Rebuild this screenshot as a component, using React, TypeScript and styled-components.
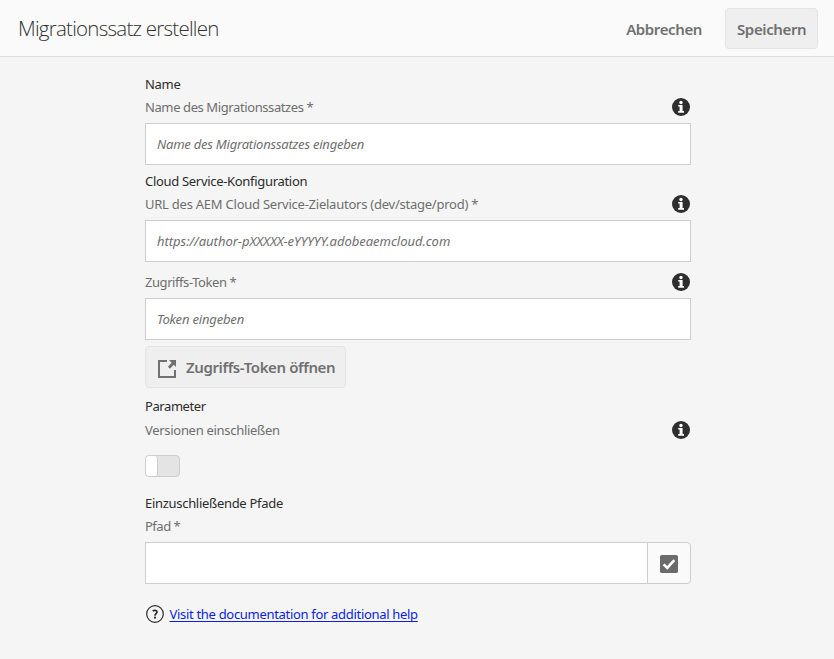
import React from "react";
import styled, { createGlobalStyle } from "styled-components";

const GlobalStyle = createGlobalStyle`
  *, *::before, *::after { box-sizing: border-box; }
  body {
    margin: 0;
    background: #f5f5f5;
    color: #323232;
    font-family: "Noto Sans", "Open Sans", sans-serif;
    font-size: 13px;
  }
`;

const Page = styled.div`
  min-height: 659px;
  background: #f5f5f5;
`;

const Header = styled.header`
  display: flex;
  align-items: center;
  height: 57px;
  padding: 0 16px 0 18px;
  background: #fafafa;
  border-bottom: 1px solid #dedede;
`;

const Title = styled.h1`
  flex: 1;
  margin: 0;
  font: 300 20.5px/30px "Open Sans", sans-serif;
  letter-spacing: -0.75px;
  color: #323232;
`;

const Button = styled.button<{ $quiet?: boolean }>`
  display: inline-flex;
  align-items: center;
  height: 41px;
  padding: 2px 11px 0;
  border: 1px solid ${(p) => (p.$quiet ? "transparent" : "#e4e4e4")};
  border-radius: 4px;
  background: ${(p) => (p.$quiet ? "transparent" : "#efefef")};
  color: #707070;
  font: 600 15px/20px "Noto Sans", sans-serif;
  letter-spacing: -0.38px;
  white-space: nowrap;
`;

const SaveButton = styled(Button)`
  width: 93px;
  margin-left: 11px;
`;

const TokenButton = styled(Button)`
  width: 201px;
  height: 42px;
  margin-top: 6px;
  padding-top: 0;
  svg { margin: 2px 9px 0 0; flex: none; }
`;

const Form = styled.main`
  width: 546px;
  margin-left: 145px;
  padding-top: 16px;
`;

const Section = styled.section<{ $gap?: number }>`
  margin-top: ${(p) => p.$gap ?? 0}px;
`;

const Heading = styled.h2<{ $track: number }>`
  height: 23px;
  margin: 0;
  font-size: 13px;
  font-weight: 400;
  line-height: 23px;
  letter-spacing: ${(p) => p.$track}px;
  color: #2c2c2c;
`;

const LabelRow = styled.div<{ $gap?: number }>`
  display: flex;
  align-items: flex-start;
  justify-content: space-between;
  height: 23px;
  margin-top: ${(p) => p.$gap ?? 0}px;
  padding-right: 1px;
  svg { margin-top: 2px; }
`;

const Label = styled.label<{ $track: number }>`
  line-height: 23px;
  letter-spacing: ${(p) => p.$track}px;
  color: #6e6e6e;
`;

const Input = styled.input<{ $track?: number }>`
  display: block;
  width: 100%;
  height: 42px;
  margin-top: 4px;
  padding: 0 11px;
  border: 1px solid #cdcdcd;
  border-radius: 0;
  outline: none;
  background: #fff;
  color: #323232;
  font: 400 13px/20px "Noto Sans", sans-serif;
  letter-spacing: ${(p) => p.$track ?? 0}px;
  &::placeholder {
    color: #6e6e6e;
    font-style: italic;
    opacity: 1;
  }
`;

const Switch = styled.button`
  display: block;
  width: 35px;
  height: 22px;
  margin-top: 13px;
  padding: 0;
  overflow: hidden;
  border: 1px solid #cdcdcd;
  border-radius: 4px;
  background: #e4e4e4;
`;

const Thumb = styled.span`
  display: block;
  width: 12px;
  height: 20px;
  border-right: 1px solid #cdcdcd;
  border-radius: 3px;
  background: #fff;
`;

const PathField = styled.div`
  display: flex;
  margin-top: 4px;
`;

const PathInput = styled(Input)`
  flex: 1;
  width: auto;
  min-width: 0;
  margin-top: 0;
  border-right: 0;
`;

const PickButton = styled.button`
  display: flex;
  align-items: center;
  justify-content: center;
  width: 44px;
  height: 42px;
  padding: 2px 0 0;
  border: 1px solid #cdcdcd;
  border-radius: 0 4px 4px 0;
  background: #fafafa;
`;

const Help = styled.div`
  display: flex;
  align-items: center;
  height: 20px;
  margin-top: 20px;
  padding-left: 1px;
  svg { flex: none; margin-right: 5.5px; }
`;

const HelpLink = styled.a`
  color: #0a1ee6;
  line-height: 20px;
  letter-spacing: -0.31px;
  text-decoration: underline;
  text-decoration-thickness: 1px;
  text-underline-offset: 2px;
  text-decoration-skip-ink: none;
`;

const InfoIcon = () => (
  <svg width="18" height="18" viewBox="0 0 18 18" aria-hidden="true">
    <circle cx="9" cy="9" r="9" fill="#2e2e2e" />
    <circle cx="9" cy="4.5" r="1.7" fill="#fff" />
    <path d="M6.2 7H10.6V13H12V14.7H6.2V13H7.6V8.6H6.2Z" fill="#fff" />
  </svg>
);

const OpenIcon = () => (
  <svg width="20" height="20" viewBox="0 0 20 20" fill="none" aria-hidden="true">
    <path d="M10 3H2V19H18V12" stroke="#707070" strokeWidth="2" />
    <path d="M12 2H19V9L16.8 6.8L12.9 10.7L10.9 8.7L14.6 4.7Z" fill="#707070" />
  </svg>
);

const CheckIcon = () => (
  <svg width="18" height="18" viewBox="0 0 18 18" aria-hidden="true">
    <rect width="18" height="18" rx="1.8" fill="#6b6b6b" />
    <path d="M3.6 9.4L7.3 12.8L14.3 5.2" fill="none" stroke="#fff" strokeWidth="2.6" />
  </svg>
);

const HelpIcon = () => (
  <svg width="18" height="18" viewBox="0 0 18 18" fill="none" aria-hidden="true">
    <circle cx="9" cy="9" r="8.3" stroke="#2c2c2c" strokeWidth="1.2" />
    <path d="M6.8 6.1C7.6 5.3 11 4.9 11 7C11 8.5 9 8.6 9 10.7" stroke="#2c2c2c" strokeWidth="1.7" />
    <circle cx="9" cy="12.7" r="1.1" fill="#2c2c2c" />
  </svg>
);

type FieldLabelProps = { text: string; track: number; gap?: number; info?: boolean };

const FieldLabel = ({ text, track, gap, info = true }: FieldLabelProps) => (
  <LabelRow $gap={gap}>
    <Label $track={track}>{text}</Label>
    {info && <InfoIcon />}
  </LabelRow>
);

export default function App() {
  return (
    <Page>
      <GlobalStyle />
      <Header>
        <Title>Migrationssatz erstellen</Title>
        <Button $quiet>Abbrechen</Button>
        <SaveButton>Speichern</SaveButton>
      </Header>
      <Form>
        <Section>
          <Heading $track={-0.3}>Name</Heading>
          <FieldLabel text="Name des Migrationssatzes *" track={-0.4} />
          <Input placeholder="Name des Migrationssatzes eingeben" $track={-0.22} />
        </Section>
        <Section $gap={5}>
          <Heading $track={-0.31}>Cloud Service-Konfiguration</Heading>
          <FieldLabel text="URL des AEM Cloud Service-Zielautors (dev/stage/prod) *" track={-0.24} />
          <Input placeholder="https://author-pXXXXX-eYYYYY.adobeaemcloud.com" $track={-0.02} />
          <FieldLabel text="Zugriffs-Token *" track={-0.43} gap={9} />
          <Input placeholder="Token eingeben" $track={-0.17} />
          <TokenButton>
            <OpenIcon />
            Zugriffs-Token öffnen
          </TokenButton>
        </Section>
        <Section $gap={7}>
          <Heading $track={-0.42}>Parameter</Heading>
          <FieldLabel text="Versionen einschließen" track={-0.3} gap={1} />
          <Switch role="switch" aria-checked="false">
            <Thumb />
          </Switch>
        </Section>
        <Section $gap={15}>
          <Heading $track={-0.3}>Einzuschließende Pfade</Heading>
          <FieldLabel text="Pfad *" track={-0.5} info={false} />
          <PathField>
            <PathInput />
            <PickButton aria-label="Pfad">
              <CheckIcon />
            </PickButton>
          </PathField>
        </Section>
        <Help>
          <HelpIcon />
          <HelpLink href="#">Visit the documentation for additional help</HelpLink>
        </Help>
      </Form>
    </Page>
  );
}
